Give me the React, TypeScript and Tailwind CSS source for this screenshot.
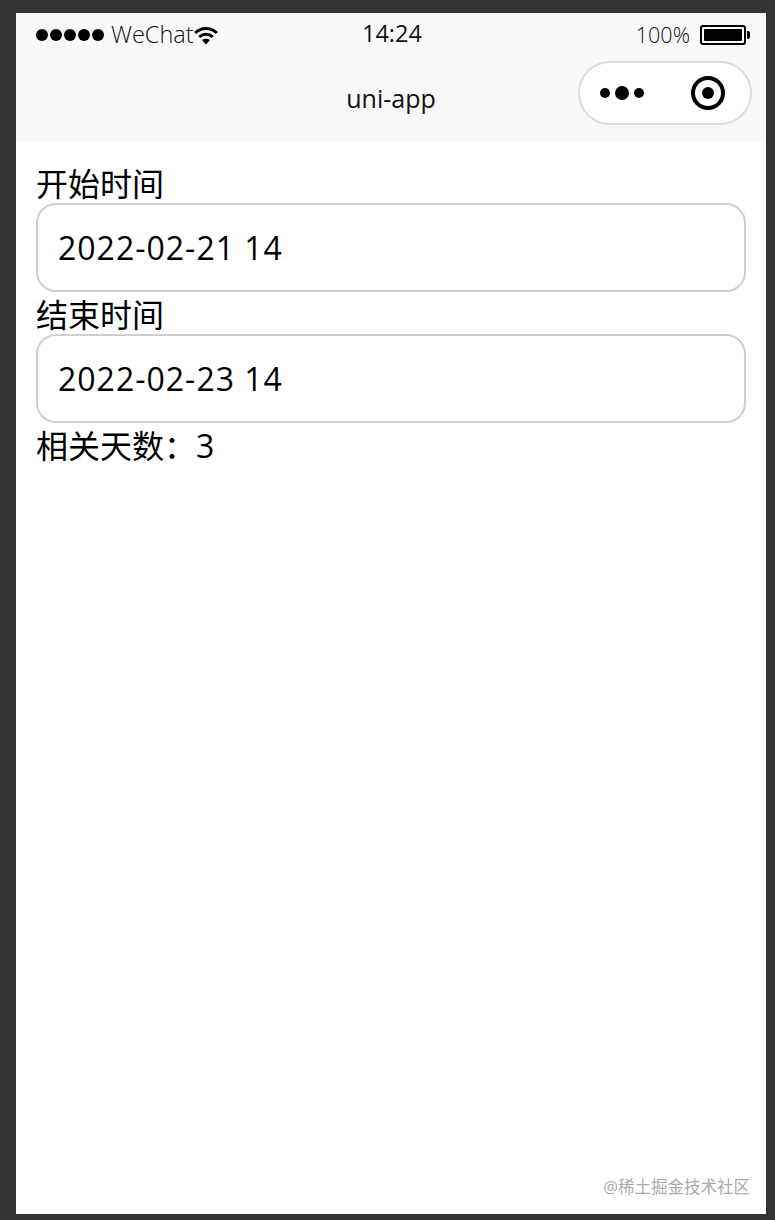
const cjk = "font-['Open_Sans','Noto_Sans_CJK_SC',sans-serif]";

const Wifi = () => (
  <svg width="24" height="20" viewBox="0 0 24 20" fill="none" stroke="#000">
    <path d="M1.2 8C7.4 2 16.6 2 22.8 8" strokeWidth="3" />
    <path d="M5.2 12C9.2 8.4 14.8 8.4 18.8 12" strokeWidth="3" />
    <path d="M8 15L12 19.5L16 15C13.6 13.2 10.4 13.2 8 15Z" fill="#000" stroke="none" />
  </svg>
);

const Battery = () => (
  <div className="flex items-center gap-[1px]">
    <div className="w-[46px] h-[20px] rounded-[3px] border-2 border-black p-[2px] bg-white">
      <div className="w-full h-full rounded-[1px] bg-black" />
    </div>
    <div className="w-[3px] h-[8px] rounded-r-[2px] bg-black" />
  </div>
);

const Capsule = () => (
  <div className="w-[174px] h-[64px] rounded-full border-2 border-[#dcdcdc] bg-white flex items-center pl-[20px] pr-[25px] justify-between">
    <div className="flex items-center gap-[5px]">
      <div className="w-[10px] h-[10px] rounded-full bg-black" />
      <div className="w-[14px] h-[14px] rounded-full bg-black" />
      <div className="w-[10px] h-[10px] rounded-full bg-black" />
    </div>
    <div className="w-[34px] h-[34px] rounded-full border-[4px] border-black flex items-center justify-center">
      <div className="w-[12px] h-[12px] rounded-full bg-black" />
    </div>
  </div>
);

const Field = ({ label, value }: { label: string; value: string }) => (
  <div className="flex flex-col">
    <div className="h-[38px] leading-[38px] text-[32px] text-black">{label}</div>
    <div className="h-[89px] rounded-[20px] border-2 border-[#cfcfcf] flex items-center px-[20px] text-[32px] tracking-[1px] text-black">
      {value}
    </div>
  </div>
);

export default function App() {
  return (
    <div className={`h-[1220px] bg-[#333333] pt-[13px] pb-[6px] pl-[16px] pr-[9px] overflow-hidden ${cjk}`}>
      <div className="relative h-full bg-white flex flex-col">
        <header className="h-[128px] bg-[#f8f8f8] flex flex-col">
          <div className="h-[44px] flex items-center justify-between pl-[20px] pr-[16px] relative">
            <div className="flex items-center">
              <div className="flex items-center gap-[2px] mr-[7px]">
                {[0, 1, 2, 3, 4].map((i) => (
                  <div key={i} className="w-[12px] h-[12px] rounded-full bg-black" />
                ))}
              </div>
              <span className="text-[23.5px] font-light text-[#111] leading-none">WeChat</span>
              <Wifi />
            </div>
            <span className="absolute left-[346px] top-[9px] text-[23.5px] text-[#111] leading-none">14:24</span>
            <div className="flex items-center gap-[10px]">
              <span className="text-[21.5px] font-light text-[#111] leading-none">100%</span>
              <Battery />
            </div>
          </div>
          <div className="flex-1 relative flex items-center justify-center">
            <span className="text-[25px] text-[#111] leading-none mb-[2px]">uni-app</span>
            <div className="absolute right-[14px] top-[4px]">
              <Capsule />
            </div>
          </div>
        </header>
        <main className="flex flex-col gap-[4px] px-[20px] pt-[24px]">
          <Field label="开始时间" value="2022-02-21 14" />
          <Field label="结束时间" value="2022-02-23 14" />
          <div className="h-[38px] leading-[38px] text-[32px] text-black">相关天数：3</div>
        </main>
        <span className="absolute right-[16px] bottom-[19px] text-[16.5px] leading-none text-[#aaaaaa]">@稀土掘金技术社区</span>
      </div>
    </div>
  );
}
